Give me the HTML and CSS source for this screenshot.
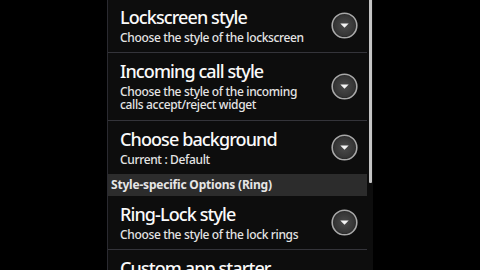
FILE: index.html
```html
<!DOCTYPE html>
<html>
<head>
<meta charset="utf-8">
<link rel="stylesheet" href="styles.css">
</head>
<body>
<div class="screen">
  <div class="panel">
    <div class="list">
      <div class="row first">
        <div class="text">
          <div class="title">Lockscreen style</div>
          <div class="sub">Choose the style of the lockscreen</div>
        </div>
        <svg class="drop" width="27" height="27" viewBox="0 0 27 27"><defs><radialGradient id="g1" cx="50%" cy="50%" r="50%"><stop offset="0" stop-color="#4c4c4c"/><stop offset="0.8" stop-color="#363636"/><stop offset="1" stop-color="#222"/></radialGradient></defs><circle cx="13.5" cy="13.5" r="12.3" fill="url(#g1)" stroke="#a8a8a8" stroke-width="1.6"/><path d="M9.3 11.4 H17.7 L13.5 15.8 Z" fill="#f4f4f4"/></svg>
      </div>
      <div class="row">
        <div class="text">
          <div class="title">Incoming call style</div>
          <div class="sub">Choose the style of the incoming</div>
          <div class="sub cont">calls accept/reject widget</div>
        </div>
        <svg class="drop" width="27" height="27" viewBox="0 0 27 27"><circle cx="13.5" cy="13.5" r="12.3" fill="url(#g1)" stroke="#a8a8a8" stroke-width="1.6"/><path d="M9.3 11.4 H17.7 L13.5 15.8 Z" fill="#f4f4f4"/></svg>
      </div>
      <div class="row last">
        <div class="text">
          <div class="title">Choose background</div>
          <div class="sub">Current : Default</div>
        </div>
        <svg class="drop" width="27" height="27" viewBox="0 0 27 27"><circle cx="13.5" cy="13.5" r="12.3" fill="url(#g1)" stroke="#a8a8a8" stroke-width="1.6"/><path d="M9.3 11.4 H17.7 L13.5 15.8 Z" fill="#f4f4f4"/></svg>
      </div>
      <div class="section">Style-specific Options (Ring)</div>
      <div class="row">
        <div class="text">
          <div class="title">Ring-Lock style</div>
          <div class="sub">Choose the style of the lock rings</div>
        </div>
        <svg class="drop" width="27" height="27" viewBox="0 0 27 27"><circle cx="13.5" cy="13.5" r="12.3" fill="url(#g1)" stroke="#a8a8a8" stroke-width="1.6"/><path d="M9.3 11.4 H17.7 L13.5 15.8 Z" fill="#f4f4f4"/></svg>
      </div>
      <div class="row">
        <div class="text">
          <div class="title">Custom app starter</div>
        </div>
      </div>
    </div>
    <div class="track"><div class="thumb"></div></div>
  </div>
</div>
</body>
</html>
```

FILE: styles.css
```css
html, body {
  margin: 0;
  padding: 0;
  background: #000;
}
.screen {
  width: 480px;
  height: 270px;
  overflow: hidden;
  background: #000;
  font-family: "Noto Sans", "Open Sans", sans-serif;
}
.panel {
  margin-left: 107px;
  width: 266px;
  height: 270px;
  display: flex;
  border-left: 1px solid #2a2a30;
  box-sizing: border-box;
  background: #0d0d0d;
}
.list {
  width: 259px;
  display: flex;
  flex-direction: column;
  margin-top: -1px;
}
.row {
  display: flex;
  align-items: center;
  padding: 6px 9px 7px 12px;
  border-bottom: 1px solid #34343a;
  flex-shrink: 0;
}
.row.last {
  border-bottom: none;
}
.text {
  flex: 1;
}
.title {
  color: #fafafa;
  font-size: 18px;
  line-height: 24px;
  font-weight: 500;
  letter-spacing: -0.9px;
}
.sub {
  color: #e4e4e4;
  font-size: 12px;
  line-height: 14px;
  margin-top: 2px;
  font-weight: 500;
  letter-spacing: -0.35px;
}
.sub.cont {
  margin-top: -1px;
  padding-bottom: 1px;
}
.drop {
  flex-shrink: 0;
  display: block;
}
.section {
  flex-shrink: 0;
  height: 22px;
  line-height: 22px;
  background: #2c2c2c;
  color: #e6e6e6;
  font-size: 12px;
  font-weight: bold;
  padding-left: 3px;
  letter-spacing: -0.2px;
}
.track {
  width: 3px;
  margin-left: 2px;
}
.thumb {
  width: 3px;
  height: 183px;
  background: #c4c4c4;
  border-radius: 0 0 1px 1px;
}
```
